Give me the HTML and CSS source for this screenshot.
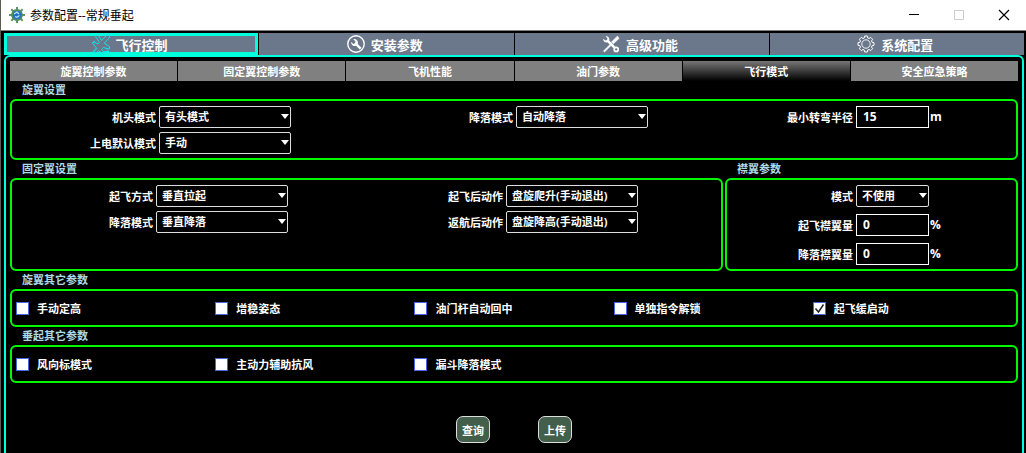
FILE: index.html
```html
<!DOCTYPE html>
<html lang="zh-CN">
  <head>
    <meta charset="UTF-8" />
    <meta name="viewport" content="width=device-width, initial-scale=1.0" />
    <title>参数配置--常规垂起</title>
    <link rel="stylesheet" href="styles.css">
  </head>
  <body>
    <header class="titlebar">
      <svg class="app-icon" viewBox="0 0 16 16">
        <path d="M8 0v16M0 8h16M2.300 2.300l11.400 11.400M13.700 2.300L2.300 13.700" stroke="#5f9468" stroke-width="2" />
        <circle cx="8" cy="8" r="5" fill="#1f6fd0" stroke="#4f8a62" stroke-width="1.800" />
        <path d="M5 7l3-2 2 2M6 9.500l2 .8 2.500-1.800" fill="none" stroke="#bfe6ff" stroke-width="1.100" />
      </svg>
      <h1 class="title">参数配置--常规垂起</h1>
      <button class="win-btn" aria-label="最小化">
        <svg viewBox="0 0 12 12"><path d="M1 5.500h10" stroke="#000" /></svg>
      </button>
      <button class="win-btn" aria-label="最大化" disabled>
        <svg viewBox="0 0 12 12"><path d="M1.500 1.500h9v9h-9z" stroke="#ccc" fill="none" /></svg>
      </button>
      <button class="win-btn" aria-label="关闭">
        <svg viewBox="0 0 12 12"><path d="M1 1l10 10M11 1L1 11" stroke="#000" stroke-width="1.200" /></svg>
      </button>
    </header>

    <nav class="tabs">
      <button class="tab active">
        <svg class="tab-icon" viewBox="0 0 20 20" fill="none" stroke="#12e0ea" stroke-width="1">
          <path d="M4 1.500h3.500l3 5 5.500-5.300 2.500.3-.3 2.500-5 5.300 5.300 3.200v2.500l-6-1.500-2 1.800 3 3.200-1.500 1-4.500-2.700-2.500 2.200-2.200-.2.200-2.300 2.500-2.500-3.700-4.500 1.200-1.500 4 2 1.500-1.500z" />
          <path d="M1 9l3-2M13 17.500h5M15 14.500l3 3M2 18.500l4-4" />
        </svg>
        飞行控制
      </button>
      <button class="tab">
        <svg class="tab-icon" viewBox="0 0 20 20">
          <circle cx="10" cy="10" r="8.200" fill="none" stroke="#fff" stroke-width="1.400" />
          <path d="M5.200 7.800a3.600 3.600 0 0 0 4.800 4l3.800 3.600 1.700-1.700-3.700-3.800a3.600 3.600 0 0 0-4.600-4.600l2.300 2.300-.6 1.700-1.700.6z" fill="#fff" />
        </svg>
        安装参数
      </button>
      <button class="tab">
        <svg class="tab-icon" viewBox="0 0 20 20">
          <path d="M16.500 2L10.500 8l1.800 1.800 5.700-5.300zM10 9.500l1 1-7.500 7.500-1-.9z" fill="#fff" stroke="#fff" stroke-width=".6" />
          <path d="M2.200 4.800a3.200 3.200 0 0 0 4.200 3.500l6 6 1.800-1.800-6-6a3.200 3.200 0 0 0-3.700-4.200l2 2.100-.5 1.500-1.600.5z" fill="#fff" />
          <circle cx="15.200" cy="15.400" r="2" fill="none" stroke="#fff" stroke-width="1.700" />
        </svg>
        高级功能
      </button>
      <button class="tab">
        <svg class="tab-icon" viewBox="0 0 20 20" fill="none" stroke="#fff">
          <path d="M8.700 2h2.600l.4 1.900 1.300.6 1.700-1.100 1.900 1.900L15.500 7l.6 1.300 1.900.4v2.600l-1.900.4-.6 1.300 1.100 1.700-1.900 1.900-1.700-1.100-1.300.6-.4 1.900H8.700l-.4-1.900-1.300-.6-1.700 1.100-1.900-1.900L4.500 13l-.6-1.300L2 11.300V8.700l1.900-.4L4.500 7 3.400 5.300l1.900-1.900L7 4.500l1.300-.6z" />
          <circle cx="10" cy="10" r="4.200" stroke-width=".9" />
        </svg>
        系统配置
      </button>
    </nav>

    <main class="panel">
      <nav class="subtabs">
        <button class="subtab">旋翼控制参数</button>
        <button class="subtab">固定翼控制参数</button>
        <button class="subtab">飞机性能</button>
        <button class="subtab">油门参数</button>
        <button class="subtab active">飞行模式</button>
        <button class="subtab">安全应急策略</button>
      </nav>

      <section>
        <h2 class="group-title">旋翼设置</h2>
        <div class="group fields rotor">
          <label for="headMode">机头模式</label>
          <div><select id="headMode"><option>有头模式</option></select></div>
          <label for="rotorLand">降落模式</label>
          <div><select id="rotorLand"><option>自动降落</option></select></div>
          <label for="minRadius">最小转弯半径</label>
          <div class="with-unit"><input type="text" id="minRadius" value="15" /><span>m</span></div>
          <label for="powerMode">上电默认模式</label>
          <div><select id="powerMode"><option>手动</option></select></div>
        </div>
      </section>

      <div class="wing-row">
        <section class="column">
          <h2 class="group-title">固定翼设置</h2>
          <div class="group fields wing">
            <label for="takeoff">起飞方式</label>
            <div><select id="takeoff"><option>垂直拉起</option></select></div>
            <label for="afterTakeoff">起飞后动作</label>
            <div><select id="afterTakeoff"><option>盘旋爬升(手动退出)</option></select></div>
            <label for="wingLand">降落模式</label>
            <div><select id="wingLand"><option>垂直降落</option></select></div>
            <label for="afterReturn">返航后动作</label>
            <div><select id="afterReturn"><option>盘旋降高(手动退出)</option></select></div>
          </div>
        </section>
        <section class="column">
          <h2 class="group-title">襟翼参数</h2>
          <div class="group fields flap">
            <label for="flapMode">模式</label>
            <div><select id="flapMode" class="short"><option>不使用</option></select></div>
            <label for="flapTakeoff">起飞襟翼量</label>
            <div class="with-unit"><input type="text" id="flapTakeoff" value="0" /><span>%</span></div>
            <label for="flapLand">降落襟翼量</label>
            <div class="with-unit"><input type="text" id="flapLand" value="0" /><span>%</span></div>
          </div>
        </section>
      </div>

      <section>
        <h2 class="group-title">旋翼其它参数</h2>
        <div class="group checks">
          <label><input type="checkbox" />手动定高</label>
          <label><input type="checkbox" />增稳姿态</label>
          <label><input type="checkbox" />油门杆自动回中</label>
          <label><input type="checkbox" />单独指令解锁</label>
          <label><input type="checkbox" checked />起飞缓启动</label>
        </div>
      </section>

      <section>
        <h2 class="group-title">垂起其它参数</h2>
        <div class="group checks">
          <label><input type="checkbox" />风向标模式</label>
          <label><input type="checkbox" />主动力辅助抗风</label>
          <label><input type="checkbox" />漏斗降落模式</label>
        </div>
      </section>

      <div class="actions">
        <button class="action">查询</button>
        <button class="action">上传</button>
      </div>
    </main>
  </body>
</html>
```
FILE: styles.css
```css
* {
  box-sizing: border-box;
}
body {
  margin: 0;
  min-height: 100vh;
  display: flex;
  flex-direction: column;
  background: #000;
  border-left: 1px solid #5c5c55;
  color: #fff;
  font-family: "Open Sans", "Noto Sans CJK SC", sans-serif;
  font-size: 11px;
  font-weight: bold;
}
button,
input,
select {
  font: inherit;
  color: inherit;
  margin: 0;
}
button {
  border: none;
  padding: 0;
}

/* window title bar */
.titlebar {
  display: flex;
  align-items: center;
  height: 31px;
  padding-left: 8px;
  background: #fff;
  border-bottom: 1px solid #808080;
  color: #000;
}
.app-icon {
  width: 16px;
  height: 16px;
  margin-right: 5px;
}
.title {
  flex: 1;
  margin: 0;
  font-size: 12px;
  font-weight: normal;
}
.win-btn {
  display: flex;
  align-items: center;
  justify-content: center;
  width: 45px;
  height: 30px;
  background: none;
}
.win-btn svg {
  width: 12px;
  height: 12px;
}

/* main tabs */
.tabs {
  display: grid;
  grid-template-columns: repeat(4, 1fr);
  gap: 1px;
  padding: 2px 2px 0 3px;
}
.tab {
  display: flex;
  align-items: center;
  justify-content: center;
  gap: 5px;
  height: 22px;
  padding-right: 4px;
  background: #6b788b;
  font-size: 13px;
}
.tab.active {
  border: 3px solid #00ffdc;
}
.tab-icon {
  width: 20px;
  height: 20px;
  margin: -2px 0;
}

/* sub tabs */
.panel {
  flex: 1;
  margin: 0 2px 0 3px;
  padding: 4px 4px 10px;
  border: 2px solid #00ffdc;
  border-bottom: none;
  border-radius: 6px 6px 0 0;
}
.subtabs {
  display: grid;
  grid-template-columns: repeat(6, 1fr);
  gap: 1px;
}
.subtab {
  height: 20px;
  background: #808080;
}
.subtab.active {
  background: linear-gradient(#777, #000);
}

/* groups */
.group-title {
  margin: 0;
  padding-left: 12px;
  color: #add8e6;
  font-size: 11px;
  line-height: 18px;
}
.group {
  border: 2px solid #00f800;
  border-radius: 6px;
}
.fields {
  display: grid;
  align-content: start;
  align-items: center;
  grid-auto-rows: 23px;
  row-gap: 3px;
  padding: 4px 0;
}
.fields > label {
  padding-right: 3px;
  text-align: right;
  white-space: nowrap;
}
.rotor {
  grid-template-columns: 147fr 176fr 181fr 166fr 174fr 160fr;
}
.wing {
  flex: 1;
  grid-template-columns: 144fr 198fr 152fr 215fr;
}
.flap {
  grid-template-columns: 129fr 160fr;
  row-gap: 6px;
}
.wing-row {
  display: grid;
  grid-template-columns: 713fr 293fr;
  gap: 2px;
}
.column {
  display: flex;
  flex-direction: column;
}
select {
  display: block;
  appearance: none;
  width: 132px;
  height: 22px;
  padding: 0 12px 0 5px;
  border: 1px solid #ddd;
  border-radius: 2px;
  background: #000 url("data:image/svg+xml,%3Csvg xmlns='http://www.w3.org/2000/svg' width='8' height='5'%3E%3Cpath d='M0 0h8L4 5z' fill='white'/%3E%3C/svg%3E") no-repeat right 1px top 7px;
}
select.short {
  width: 73px;
}
.with-unit {
  display: flex;
  align-items: center;
  gap: 1px;
  font-size: 12px;
}
.with-unit input {
  width: 73px;
  height: 22px;
  padding: 0 6px;
  border: 1px solid #fff;
  background: #000;
}

/* check boxes */
.checks {
  display: grid;
  grid-template-columns: repeat(5, 1fr);
  padding: 0 4px;
}
.checks label {
  display: flex;
  align-items: center;
  gap: 8px;
  height: 34px;
}
.checks input {
  appearance: none;
  width: 13px;
  height: 13px;
  border: 1px solid #4468dc;
  background: #fff;
}
.checks input:checked {
  background: #fff url("data:image/svg+xml,%3Csvg xmlns='http://www.w3.org/2000/svg' width='11' height='11'%3E%3Cpath d='M1.500 5.500l3 3.500L9.500 1.500' fill='none' stroke='%23222' stroke-width='1.500'/%3E%3C/svg%3E") center no-repeat;
}

/* bottom buttons */
.actions {
  display: flex;
  justify-content: center;
  gap: 48px;
  margin-top: 33px;
}
.action {
  width: 34px;
  height: 27px;
  border: 1px solid #ddd;
  border-radius: 7px;
  background: #435f4b;
}
```
